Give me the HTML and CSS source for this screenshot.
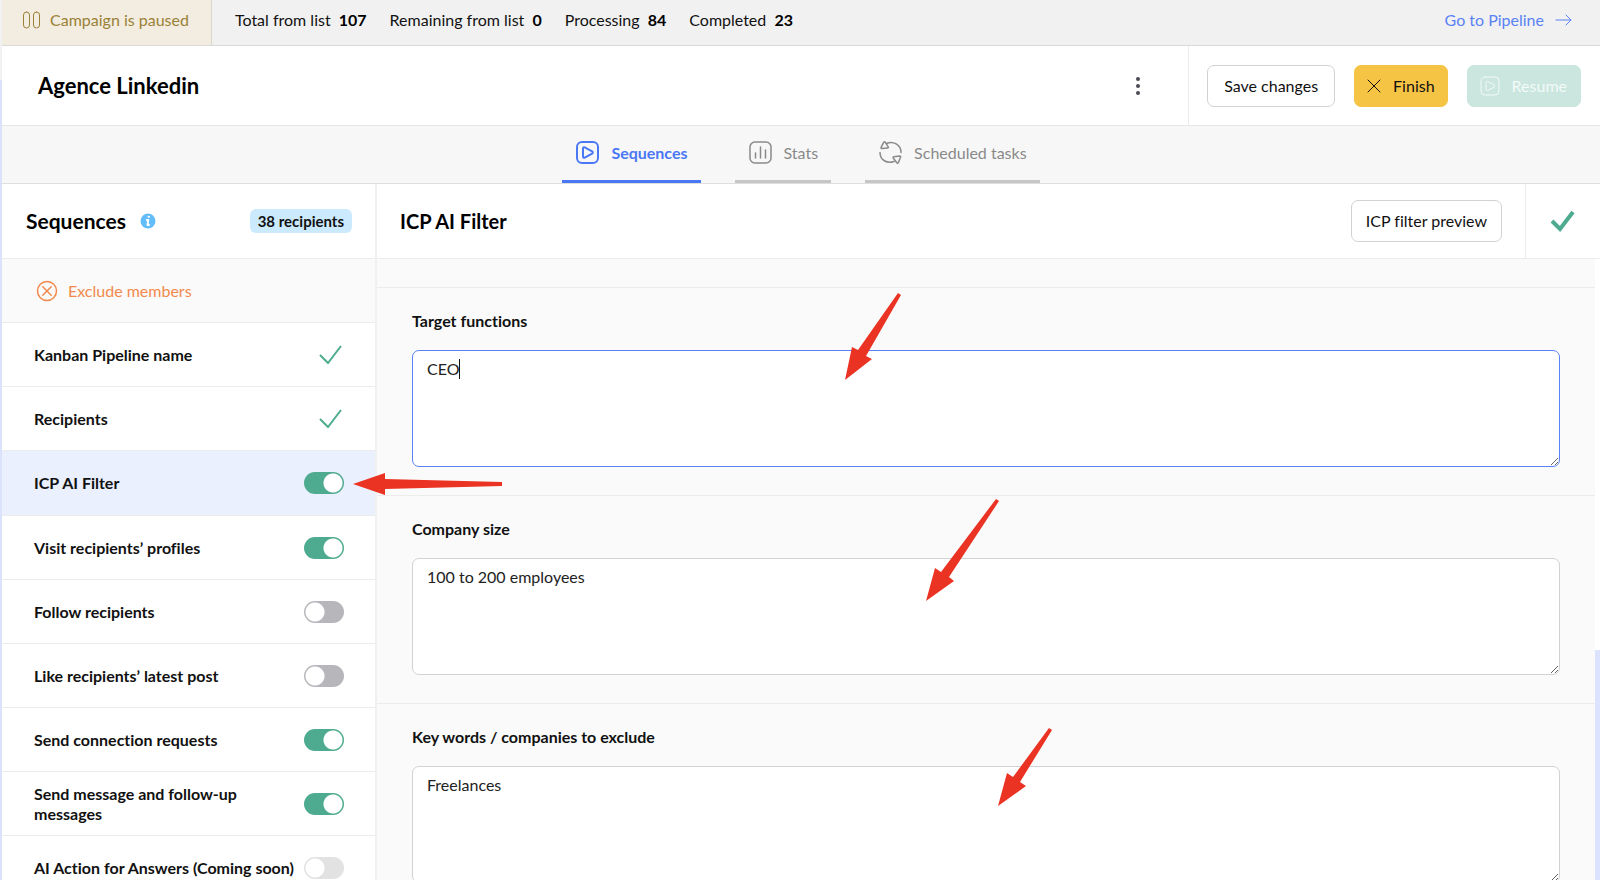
FILE: index.html
```html
<!DOCTYPE html>
<html lang="en">
<head>
    <meta charset="UTF-8">
    <meta name="viewport" content="width=device-width, initial-scale=1.0">
    <title>Agence Linkedin - Campaign</title>
    <link rel="stylesheet" href="styles.css">
</head>
<body>
    <div class="page">
        <div class="status-bar">
            <div class="status">
                <svg class="pause-icon" width="20" height="20" viewBox="0 0 20 20">
                    <rect x="1.5" y="2" width="6" height="16" rx="3"/>
                    <rect x="11.5" y="2" width="6" height="16" rx="3"/>
                </svg>
                <span>Campaign is paused</span>
            </div>
            <ul class="counters">
                <li>Total from list <b>107</b></li>
                <li>Remaining from list <b>0</b></li>
                <li>Processing <b>84</b></li>
                <li>Completed <b>23</b></li>
            </ul>
            <a class="pipeline-link" href="#">
                Go to Pipeline
                <svg width="18" height="14" viewBox="0 0 18 14"><path d="M1 7h15M11 2l5 5-5 5"/></svg>
            </a>
        </div>

        <header class="campaign">
            <h1>Agence Linkedin</h1>
            <button class="menu-btn" type="button" aria-label="More actions">
                <svg width="8" height="20" viewBox="0 0 8 20">
                    <circle cx="4" cy="3" r="2"/>
                    <circle cx="4" cy="10" r="2"/>
                    <circle cx="4" cy="17" r="2"/>
                </svg>
            </button>
            <div class="actions">
                <button class="btn btn-save" type="button">Save changes</button>
                <button class="btn btn-finish" type="button">
                    <svg width="14" height="14" viewBox="0 0 14 14"><path d="M1 1l12 12M13 1L1 13"/></svg>
                    Finish
                </button>
                <button class="btn btn-resume" type="button" disabled>
                    <svg width="20" height="20" viewBox="0 0 20 20">
                        <rect x="1" y="1" width="18" height="18" rx="4"/>
                        <path d="M6 6.4c0-.9.8-1.4 1.6-1l6.6 3.6c.9.5.9 1.5 0 2l-6.6 3.6c-.8.4-1.6-.1-1.6-1z"/>
                    </svg>
                    Resume
                </button>
            </div>
        </header>

        <nav class="tabs">
            <a class="tab active" href="#">
                <svg width="24" height="24" viewBox="0 0 24 24">
                    <rect x="1" y="1" width="21" height="21" rx="5"/>
                    <path d="M7 7.4c0-1 .8-1.5 1.7-1.1l7.4 4c.9.5.9 1.8 0 2.3l-7.4 4c-.9.5-1.7 0-1.7-1z"/>
                </svg>
                Sequences
            </a>
            <a class="tab" href="#">
                <svg width="24" height="24" viewBox="0 0 24 24">
                    <rect x="1" y="1" width="21" height="21" rx="5"/>
                    <path d="M6.5 12v5M11.5 6v11M16.500 9v8"/>
                </svg>
                Stats
            </a>
            <a class="tab" href="#">
                <svg width="24" height="24" viewBox="0 0 24 24">
                    <path d="M7.500 2.500C14 -.5 22 3.500 22 11.500M1 11.500C1 19 8 23 15 20.500"/>
                    <path d="M4.800 1.200c.4-.6 1-.5 1.400 0l3 4.600c.4.7 0 1.200-.6 1.200l-5.600.6c-.8 0-1.200-.5-.9-1.200z"/>
                    <path d="M14.200 17c-.3-.7 0-1.200.7-1.300l5.800-.6c.8 0 1.200.5.900 1.200l-2.300 5.300c-.4.700-1 .8-1.500.2z"/>
                </svg>
                Scheduled tasks
            </a>
        </nav>

        <main class="workspace">
            <aside class="sidebar">
                <div class="panel-head">
                    <h2>Sequences</h2>
                    <svg class="info-icon" width="16" height="16" viewBox="0 0 16 16">
                        <circle cx="8" cy="8" r="7.500"/>
                        <path d="M8.600 3.800h.4M6.800 7h1.500l-.8 5h1.500"/>
                    </svg>
                    <span class="badge">38 recipients</span>
                </div>
                <button class="exclude" type="button">
                    <svg width="22" height="22" viewBox="0 0 22 22">
                        <circle cx="11" cy="11" r="9.500"/>
                        <path d="M6.800 6.800l8.400 8.400M15.200 6.800l-8.400 8.400"/>
                    </svg>
                    Exclude members
                </button>
                <ul class="steps">
                    <li class="step">
                        <span>Kanban Pipeline name</span>
                        <svg class="check" width="26" height="22" viewBox="0 0 26 22"><path d="M2 11l8 8L23 2"/></svg>
                    </li>
                    <li class="step">
                        <span>Recipients</span>
                        <svg class="check" width="26" height="22" viewBox="0 0 26 22"><path d="M2 11l8 8L23 2"/></svg>
                    </li>
                    <li class="step selected">
                        <label for="icpFilter">ICP AI Filter</label>
                        <input class="toggle" type="checkbox" id="icpFilter" checked>
                        <svg class="arrow arrow-toggle" width="150" height="24" viewBox="0 0 150 24">
                            <path d="M1 12L33 1v6l117 3v4L33 17v6z"/>
                        </svg>
                    </li>
                    <li class="step">
                        <label for="visitProfiles">Visit recipients’ profiles</label>
                        <input class="toggle" type="checkbox" id="visitProfiles" checked>
                    </li>
                    <li class="step">
                        <label for="follow">Follow recipients</label>
                        <input class="toggle" type="checkbox" id="follow">
                    </li>
                    <li class="step">
                        <label for="likePost">Like recipients’ latest post</label>
                        <input class="toggle" type="checkbox" id="likePost">
                    </li>
                    <li class="step">
                        <label for="connect">Send connection requests</label>
                        <input class="toggle" type="checkbox" id="connect" checked>
                    </li>
                    <li class="step">
                        <label for="message">Send message and follow-up messages</label>
                        <input class="toggle" type="checkbox" id="message" checked>
                    </li>
                    <li class="step">
                        <label for="aiAction">AI Action for Answers (Coming soon)</label>
                        <input class="toggle" type="checkbox" id="aiAction" disabled>
                    </li>
                </ul>
            </aside>

            <section class="editor">
                <div class="editor-head">
                    <h2>ICP AI Filter</h2>
                    <button class="btn" type="button">ICP filter preview</button>
                    <div class="editor-done">
                        <svg class="check check-bold" width="26" height="22" viewBox="0 0 26 22"><path d="M2 11l8 8L23 2"/></svg>
                    </div>
                </div>
                <div class="editor-body">
                    <form class="fields">
                        <div class="field">
                            <label for="functions">Target functions</label>
                            <textarea class="focused" id="functions">CEO</textarea>
                            <span class="caret"></span>
                            <svg class="arrow arrow-functions" width="58" height="90" viewBox="0 0 58 90">
                                <path d="M1 88L8 55l6 3L54 1l3 2-35 61 6 3z"/>
                            </svg>
                        </div>
                        <div class="field">
                            <label for="companySize">Company size</label>
                            <textarea id="companySize">100 to 200 employees</textarea>
                            <svg class="arrow arrow-size" width="74" height="104" viewBox="0 0 74 104">
                                <path d="M1 102l9-33 6 4L71 0l3 2-50 76 5 4z"/>
                            </svg>
                        </div>
                        <div class="field">
                            <label for="exclude">Key words / companies to exclude</label>
                            <textarea id="exclude">Freelances</textarea>
                            <svg class="arrow arrow-exclude" width="56" height="80" viewBox="0 0 56 80">
                                <path d="M1 78l9-33 6 4L52 0l3 2-32 52 6 4z"/>
                            </svg>
                        </div>
                    </form>
                    <div class="scroll-track">
                        <div class="scroll-thumb"></div>
                    </div>
                </div>
            </section>
        </main>
    </div>
</body>
</html>
```

FILE: styles.css
```css
* {
    box-sizing: border-box;
}

body {
    margin: 0;
    padding-left: 2px;
    height: 100vh;
    overflow: hidden;
    font-family: Lato, "Open Sans", sans-serif;
    font-size: 16px;
    line-height: 20px;
    font-variant-ligatures: none;
    color: #111;
    background: linear-gradient(#f1f1f1 80px, #dbe3fc 80px);
}

h1,
h2,
ul {
    margin: 0;
    padding: 0;
    list-style: none;
}

h1,
h2 {
    line-height: 26px;
    color: #000;
}

h1 {
    font-size: 22px;
}

h2 {
    font-size: 20px;
}

svg {
    flex: none;
    fill: none;
    stroke: currentColor;
    stroke-linecap: round;
    stroke-linejoin: round;
}

a {
    color: inherit;
    text-decoration: none;
}

button,
textarea {
    font: inherit;
}

.page {
    display: flex;
    flex-direction: column;
    height: 100%;
    background: #fff;
}

/* Top status bar */
.status-bar {
    display: flex;
    flex: none;
    height: 46px;
    background: #f1f1f1;
    border-bottom: 1px solid #d9d9d9;
}

.status-bar > * {
    padding-bottom: 5px;
}

.status {
    display: flex;
    align-items: center;
    gap: 8px;
    padding-left: 20px;
    padding-right: 22px;
    color: #9a8137;
    background: #f3ece0;
    border-right: 1px solid #ddd6ca;
}

.counters {
    display: flex;
    align-items: center;
    gap: 23px;
    margin-left: 23px;
}

.counters b {
    margin-left: 4px;
    color: #000;
}

.pipeline-link {
    display: flex;
    align-items: center;
    gap: 11px;
    margin-left: auto;
    margin-right: 27px;
    color: #5a82f5;
}

/* Campaign title and actions */
.campaign {
    display: flex;
    flex: none;
    align-items: center;
    height: 80px;
    padding-left: 36px;
    border-bottom: 1px solid #e6e6e6;
}

.menu-btn {
    display: flex;
    margin-left: auto;
    padding: 8px 46px;
    border: 0;
    background: none;
    color: #4b4b55;
}

.menu-btn svg {
    fill: currentColor;
    stroke: none;
}

.actions {
    display: flex;
    align-items: center;
    align-self: stretch;
    gap: 19px;
    padding: 0 19px 0 18px;
    border-left: 1px solid #ececec;
}

.btn {
    display: flex;
    align-items: center;
    gap: 12px;
    height: 42px;
    padding: 0 14px;
    border: 1px solid #d2d2d2;
    border-radius: 7px;
    background: #fff;
    color: #111;
}

.btn-save {
    padding: 0 16px;
}

.btn-finish {
    padding: 0 12px;
    border-color: #f6c445;
    background: #f6c445;
}

.btn-resume {
    padding: 0 13px 0 12px;
    border-color: #cae6de;
    background: #cae6de;
    color: #f3faf8;
}

/* Tabs */
.tabs {
    display: flex;
    flex: none;
    justify-content: center;
    gap: 34px;
    height: 58px;
    background: #f7f7f7;
    border-bottom: 1px solid #dedede;
}

.tab {
    display: flex;
    align-items: center;
    gap: 11px;
    padding: 0 13px 1px 14px;
    border-bottom: 3px solid #c6c6c6;
    color: #8a8a8a;
}

.tab svg {
    stroke-width: 1.5;
}

.tab.active {
    border-color: #4a78f5;
    color: #4a78f5;
    font-weight: bold;
}

.tab.active svg {
    stroke-width: 2;
}

.workspace {
    display: flex;
    flex: 1;
    min-height: 0;
}

/* Sequence list */
.sidebar {
    position: relative;
    z-index: 1;
    flex: none;
    width: 375px;
    border-right: 2px solid #f0f0f0;
}

.panel-head {
    display: flex;
    align-items: center;
    height: 75px;
    padding: 0 23px 0 24px;
    border-bottom: 1px solid #ececec;
}

.panel-head h2 {
    font-size: 21px;
}

.info-icon {
    margin-left: 14px;
    fill: #64bdfb;
    stroke: none;
}

.info-icon path {
    fill: none;
    stroke: #fff;
    stroke-width: 2;
}

.badge {
    margin-left: auto;
    padding: 2px 8px;
    border-radius: 6px;
    background: #cbeafd;
    font-size: 15px;
    font-weight: bold;
}

.exclude {
    display: flex;
    align-items: center;
    gap: 10px;
    width: 100%;
    height: 64px;
    padding: 0 34px;
    border: 0;
    border-bottom: 1px solid #ececec;
    background: #fafafa;
    color: #f2894c;
}

.exclude svg {
    stroke-width: 1.5;
}

.step {
    position: relative;
    display: flex;
    align-items: center;
    justify-content: space-between;
    height: 64px;
    padding: 0 31px 0 32px;
    border-bottom: 1px solid #ececec;
    font-weight: bold;
}

.step.selected {
    height: 65px;
    background: #eaf0fe;
}

.check {
    color: #4fab8f;
    stroke-width: 2;
    stroke-linecap: butt;
    stroke-linejoin: miter;
}

.check-bold {
    stroke-width: 4;
}

.toggle {
    flex: none;
    appearance: none;
    width: 40px;
    height: 22px;
    margin: 0;
    border-radius: 11px;
    background: radial-gradient(circle at 11px 11px, #fff 9px, #b6b6bb 10px);
}

.toggle:checked {
    background: radial-gradient(circle at 29px 11px, #fff 9px, #4fab8f 10px);
}

.toggle:disabled {
    background: radial-gradient(circle at 11px 11px, #fff 9px, #e2e2e2 10px);
}

/* Filter form */
.editor {
    display: flex;
    flex: 1;
    flex-direction: column;
    min-width: 0;
}

.editor-head {
    display: flex;
    flex: none;
    align-items: center;
    height: 75px;
    padding-left: 23px;
    border-bottom: 1px solid #ececec;
}

.editor-head .btn {
    margin-left: auto;
    margin-right: 23px;
}

.editor-done {
    display: flex;
    align-items: center;
    align-self: stretch;
    padding: 0 24px;
    border-left: 1px solid #ececec;
}

.editor-body {
    display: flex;
    flex: 1;
    min-height: 0;
}

.fields {
    flex: 1;
    padding-top: 28px;
    background: #fafafa;
    overflow: hidden;
}

.field {
    position: relative;
    padding: 20px 35px 28px;
    border-top: 1px solid #ececec;
}

.field label {
    display: block;
    margin-bottom: 16px;
    line-height: 26px;
    font-weight: bold;
}

.field textarea {
    display: block;
    width: 100%;
    height: 117px;
    padding: 8px 14px;
    border: 1px solid #d2d2d2;
    border-radius: 7px;
    outline: 0;
    background: #fff;
    color: #222;
    resize: vertical;
}

.field textarea.focused {
    border-color: #5a82f5;
}

.caret {
    position: absolute;
    top: 71px;
    left: 82px;
    width: 1px;
    height: 20px;
    background: #111;
}

.scroll-track {
    display: flex;
    flex-direction: column;
    justify-content: flex-end;
    width: 5px;
    background: #fff;
}

.scroll-thumb {
    height: 37%;
    background: #dbe3ff;
}

/* Red pointers laid over the form */
.arrow {
    position: absolute;
    fill: #ea3323;
    stroke: none;
    pointer-events: none;
}

.arrow-toggle {
    top: 21px;
    left: 350px;
}

.arrow-functions {
    top: 4px;
    left: 467px;
}

.arrow-size {
    top: 3px;
    left: 548px;
}

.arrow-exclude {
    top: 24px;
    left: 620px;
}
```
